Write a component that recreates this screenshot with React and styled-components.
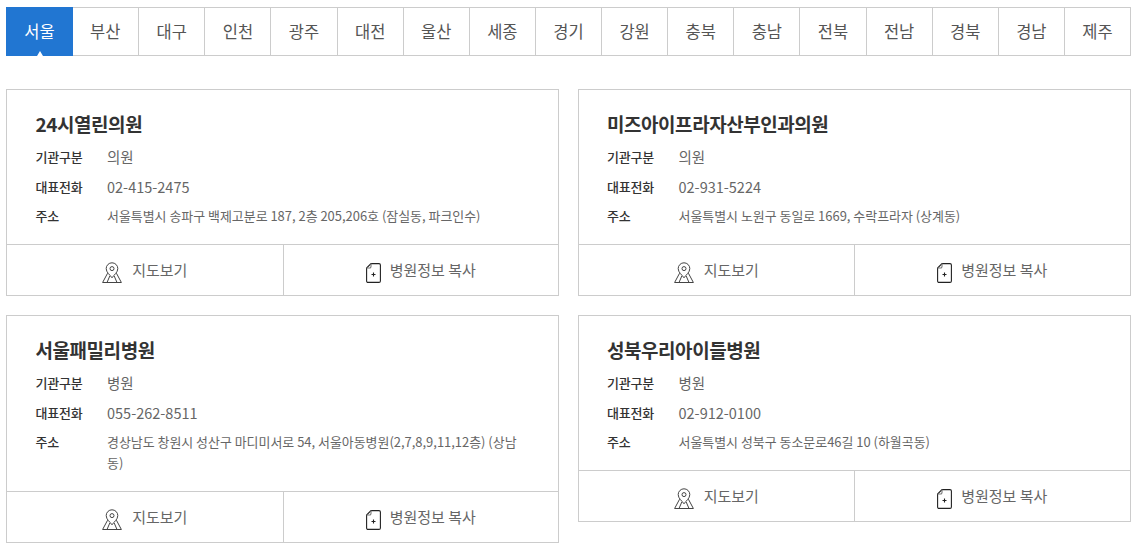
import React from "react";
import styled, { createGlobalStyle } from "styled-components";

const Global = createGlobalStyle`
  html, body { margin: 0; padding: 0; background: #fff; }
  body { font-family: "Noto Sans CJK KR", "Noto Sans", sans-serif; color: #333; }
`;

const Page = styled.div`
  width: 1125px;
  padding: 7px 4px 0 6px;
`;

const Tabs = styled.ul`
  display: grid;
  grid-template-columns: repeat(17, 1fr);
  margin: 0 0 33px;
  padding: 0;
  list-style: none;
  height: 49px;
  box-sizing: border-box;
  border: 1px solid #ccc;
  border-left: 0;
`;

const Tab = styled.li`
  position: relative;
  display: flex;
  align-items: center;
  justify-content: center;
  font-size: 16.5px;
  color: ${p => (p.$active ? "#fff" : "#555")};
  background: ${p => (p.$active ? "#2176d2" : "transparent")};
  border-left: ${p => (p.$plain ? "0" : "1px solid #ccc")};
  margin: ${p => (p.$active ? "-1px -1px -1px 0" : "0")};
  padding-bottom: 1px;
  box-sizing: border-box;
  &::after {
    content: "";
    display: ${p => (p.$active ? "block" : "none")};
    position: absolute;
    left: 50%;
    bottom: 0;
    margin-left: -3px;
    border: 3px solid transparent;
    border-top: 0;
    border-bottom: 5px solid #fff;
  }
`;

const Grid = styled.div`
  display: grid;
  grid-template-columns: 553px 553px;
  column-gap: 18.5px;
  row-gap: 19px;
  align-items: start;
`;

const Card = styled.article`
  border: 1px solid #ccc;
  box-sizing: border-box;
`;

const Body = styled.div`
  padding: 20px 28.5px 18px;
`;

const Title = styled.h3`
  margin: 0 0 8px;
  font-size: 19px;
  line-height: 28px;
  font-weight: 700;
  color: #333;
  letter-spacing: -0.45px;
`;

const Row = styled.div`
  display: flex;
  align-items: flex-start;
  margin-top: ${p => p.$gap}px;
`;

const Label = styled.span`
  flex: 0 0 71.5px;
  font-size: 13px;
  line-height: ${p => p.$lh}px;
  font-weight: 500;
  color: #333;
  letter-spacing: -0.2px;
`;

const Value = styled.span`
  flex: 1;
  font-size: ${p => p.$size}px;
  line-height: ${p => p.$lh}px;
  color: #666;
`;

const Actions = styled.div`
  display: grid;
  grid-template-columns: 275.5px 1fr;
  height: 50px;
  border-top: 1px solid #ccc;
`;

const Action = styled.a`
  display: flex;
  align-items: center;
  justify-content: center;
  gap: ${p => p.$gap}px;
  font-size: 15px;
  color: #666;
  & + & { border-left: 1px solid #ccc; }
`;

const ActionText = styled.span`
  padding-bottom: 2px;
`;

const IconSlot = styled.span`
  display: flex;
  padding-top: 5px;
`;

const MapIcon = () => (
  <svg width="20" height="22" viewBox="0 0 20 22" fill="none" stroke="#444" strokeWidth="1">
    <path d="M10 15.8 C8 12.8 4.2 10.5 4.2 6.6 A5.8 5.8 0 0 1 15.8 6.6 C15.8 10.5 12 12.8 10 15.8Z" />
    <circle cx="10" cy="6.6" r="2" />
    <path d="M5.6 11.2 L0.6 20.5 H19.4 L14.4 11.2 M5 20.5 L7.8 14 M15 20.5 L12.2 14" />
  </svg>
);

const CopyIcon = () => (
  <svg width="15" height="20" viewBox="0 0 15 20" fill="none" stroke="#222" strokeWidth="1.1">
    <path d="M5 .6 H13 A1.4 1.4 0 0 1 14.4 2 V18 A1.4 1.4 0 0 1 13 19.4 H2 A1.4 1.4 0 0 1 .6 18 V5 Z" />
    <path d="M5 .6 V3.6 A1.4 1.4 0 0 1 3.6 5 H.6" stroke="#777" />
    <path d="M7.5 9.5 V13.5 M5.5 11.5 H9.5" />
  </svg>
);

const regions = ["서울","부산","대구","인천","광주","대전","울산","세종","경기","강원","충북","충남","전북","전남","경북","경남","제주"];

const hospitals = [
  { name: "24시열린의원", type: "의원", tel: "02-415-2475", addr: "서울특별시 송파구 백제고분로 187, 2층 205,206호 (잠실동, 파크인수)" },
  { name: "미즈아이프라자산부인과의원", type: "의원", tel: "02-931-5224", addr: "서울특별시 노원구 동일로 1669, 수락프라자 (상계동)" },
  { name: "서울패밀리병원", type: "병원", tel: "055-262-8511", addr: "경상남도 창원시 성산구 마디미서로 54, 서울아동병원(2,7,8,9,11,12층) (상남동)" },
  { name: "성북우리아이들병원", type: "병원", tel: "02-912-0100", addr: "서울특별시 성북구 동소문로46길 10 (하월곡동)" },
];

export default function App() {
  return (
    <Page>
      <Global />
      <Tabs>
        {regions.map((r, i) => (
          <Tab key={r} $active={i === 0} $plain={i < 2}>{r}</Tab>
        ))}
      </Tabs>
      <Grid>
        {hospitals.map(h => (
          <Card key={h.name}>
            <Body>
              <Title>{h.name}</Title>
              <Row $gap={0}><Label $lh={22}>기관구분</Label><Value $size={14.5} $lh={22}>{h.type}</Value></Row>
              <Row $gap={8}><Label $lh={22}>대표전화</Label><Value $size={14.5} $lh={22}>{h.tel}</Value></Row>
              <Row $gap={7}><Label $lh={21}>주소</Label><Value $size={12.95} $lh={21}>{h.addr}</Value></Row>
            </Body>
            <Actions>
              <Action $gap={10}><IconSlot><MapIcon /></IconSlot><ActionText>지도보기</ActionText></Action>
              <Action $gap={9}><IconSlot><CopyIcon /></IconSlot><ActionText>병원정보 복사</ActionText></Action>
            </Actions>
          </Card>
        ))}
      </Grid>
    </Page>
  );
}
